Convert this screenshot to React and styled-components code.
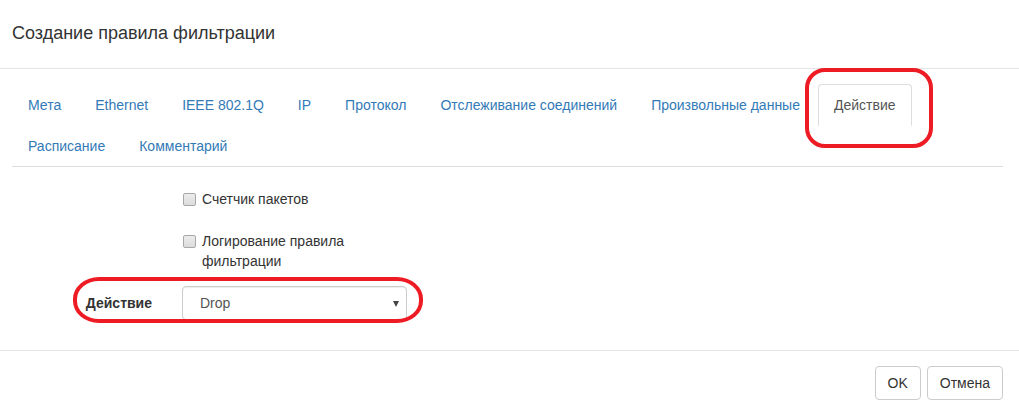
import React from 'react';
import styled, { createGlobalStyle } from 'styled-components';

const GlobalStyle = createGlobalStyle`
  html, body {
    margin: 0;
    padding: 0;
    background: #fff;
  }
  body {
    font-family: 'Liberation Sans', Arial, sans-serif;
    font-size: 14px;
    line-height: 20px;
    color: #333;
  }
  * { box-sizing: border-box; }
`;

const Modal = styled.div`
  position: relative;
  width: 1019px;
  background: #fff;
`;

const Header = styled.div`
  padding: 20px 12px 22px 12px;
  border-bottom: 1px solid #e5e5e5;
`;

const Title = styled.h4`
  margin: 0;
  font-size: 18px;
  line-height: 26px;
  font-weight: normal;
  color: #333;
`;

const Body = styled.div`
  padding: 15px 16px 15px 12px;
`;

const Tabs = styled.ul`
  list-style: none;
  margin: 0;
  padding: 0;
  display: flex;
  flex-wrap: wrap;
  border-bottom: 1px solid #ddd;
`;

const Tab = styled.li`
  margin: 0 2px -1px 0;
`;

const TabLink = styled.a`
  display: block;
  padding: 10px 15px;
  line-height: 20px;
  border: 1px solid ${(p) => (p.$active ? '#ddd' : 'transparent')};
  border-bottom-color: ${(p) => (p.$active ? '#fff' : 'transparent')};
  border-radius: 4px 4px 0 0;
  background: ${(p) => (p.$active ? '#fff' : 'transparent')};
  color: ${(p) => (p.$active ? '#555' : '#337ab7')};
  text-decoration: none;
  cursor: pointer;
`;

const Form = styled.div`
  padding: 15px 0 15px 0;
  display: flex;
  flex-direction: column;
  gap: 15px;
`;

const Group = styled.div`
  display: grid;
  grid-template-columns: 140px 225px;
  column-gap: 30px;
`;

const Label = styled.label`
  padding-top: 7px;
  text-align: right;
  font-weight: bold;
  color: #333;
`;

const CheckRow = styled.label`
  grid-column: 2;
  display: grid;
  grid-template-columns: 20px 1fr;
  padding-top: 7px;
  min-height: 27px;
  color: #333;
  cursor: pointer;
`;

const Box = styled.span`
  display: block;
  width: 13px;
  height: 13px;
  margin: 4px 0 0 1px;
  border: 1px solid #a8a8a8;
  border-radius: 2px;
  background: linear-gradient(#ececec, #dcdcdc);
`;

const Select = styled.div`
  position: relative;
  height: 34px;
  padding: 6px 12px 6px 17px;
  border: 1px solid #ccc;
  border-radius: 4px;
  box-shadow: inset 0 1px 1px rgba(0, 0, 0, 0.075);
  color: #555;
  line-height: 20px;

  &::after {
    content: '';
    position: absolute;
    right: 7px;
    top: 14px;
    border-left: 3.5px solid transparent;
    border-right: 3.5px solid transparent;
    border-top: 6px solid #444;
  }
`;

const Footer = styled.div`
  display: flex;
  justify-content: flex-end;
  gap: 6px;
  padding: 15px 16px 15px 12px;
  border-top: 1px solid #e5e5e5;
`;

const Button = styled.button`
  height: 34px;
  padding: 6px 12px;
  font-family: inherit;
  font-size: 14px;
  line-height: 20px;
  color: #333;
  background: #fff;
  border: 1px solid #ccc;
  border-radius: 4px;
  cursor: pointer;
`;

const Mark = styled.div`
  position: absolute;
  border: 4px solid #ed1c24;
  pointer-events: none;
`;

const TabMark = styled(Mark)`
  left: 805px;
  top: 68px;
  width: 128px;
  height: 80px;
  border-radius: 20px;
`;

const FieldMark = styled(Mark)`
  left: 73px;
  top: 277px;
  width: 350px;
  height: 46px;
  border-radius: 26px / 22px;
`;

const tabs = [
  'Мета',
  'Ethernet',
  'IEEE 802.1Q',
  'IP',
  'Протокол',
  'Отслеживание соединений',
  'Произвольные данные',
  'Действие',
  'Расписание',
  'Комментарий',
];

const App = () => (
  <>
    <GlobalStyle />
    <Modal>
      <Header>
        <Title>Создание правила фильтрации</Title>
      </Header>
      <Body>
        <Tabs>
          {tabs.map((t) => (
            <Tab key={t}>
              <TabLink $active={t === 'Действие'}>{t}</TabLink>
            </Tab>
          ))}
        </Tabs>
        <Form>
          <Group>
            <CheckRow>
              <Box />
              <span>Счетчик пакетов</span>
            </CheckRow>
          </Group>
          <Group>
            <CheckRow>
              <Box />
              <span>Логирование правила фильтрации</span>
            </CheckRow>
          </Group>
          <Group>
            <Label>Действие</Label>
            <Select>Drop</Select>
          </Group>
        </Form>
      </Body>
      <Footer>
        <Button>OK</Button>
        <Button>Отмена</Button>
      </Footer>
      <TabMark />
      <FieldMark />
    </Modal>
  </>
);

export default App;
